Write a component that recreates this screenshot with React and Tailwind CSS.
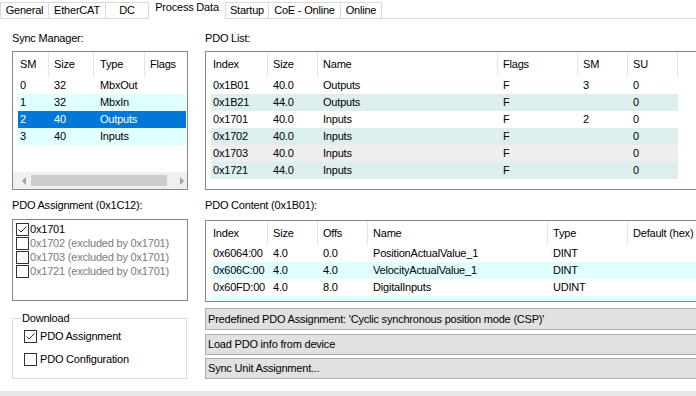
import React from "react";

function Check({ checked }) {
  return (
    <span className="w-[13px] h-[13px] border border-[#333333] bg-white flex items-center justify-center shrink-0">
      {checked && (
        <svg width="11" height="11" viewBox="0 0 11 11">
          <path d="M1.5 5.5 L4 8 L9.5 2.5" stroke="#333333" strokeWidth="1" fill="none" />
        </svg>
      )}
    </span>
  );
}

function Tabs() {
  const tab = "h-[16px] border-t border-r border-[#d9d9d9] flex items-center justify-center bg-white";
  return (
    <div className="h-[19px] border-b border-[#d9d9d9] flex items-end shrink-0">
      <div className={`${tab} border-l w-[49px]`}>General</div>
      <div className={`${tab} w-[57px]`}>EtherCAT</div>
      <div className={`${tab} w-[43px]`}>DC</div>
      <div className="relative -mb-px h-[19px] w-[76px] bg-white flex justify-center pt-[1px]">Process Data</div>
      <div className={`${tab} border-l w-[44px]`}>Startup</div>
      <div className={`${tab} w-[72px]`}>CoE - Online</div>
      <div className={`${tab} w-[41px]`}>Online</div>
    </div>
  );
}

const smRows = [
  { c: ["0", "32", "MbxOut", ""], bg: "bg-white" },
  { c: ["1", "32", "MbxIn", ""], bg: "bg-[#e0ffff]" },
  { c: ["2", "40", "Outputs", ""], bg: "bg-[#0078d7] text-white" },
  { c: ["3", "40", "Inputs", ""], bg: "bg-[#e0ffff]" },
];

const pdoRows = [
  { c: ["0x1B01", "40.0", "Outputs", "F", "3", "0"], bg: "bg-white" },
  { c: ["0x1B21", "44.0", "Outputs", "F", "", "0"], bg: "bg-[#dcefee]" },
  { c: ["0x1701", "40.0", "Inputs", "F", "2", "0"], bg: "bg-white" },
  { c: ["0x1702", "40.0", "Inputs", "F", "", "0"], bg: "bg-[#dcefee]" },
  { c: ["0x1703", "40.0", "Inputs", "F", "", "0"], bg: "bg-[#eeeeee]" },
  { c: ["0x1721", "44.0", "Inputs", "F", "", "0"], bg: "bg-[#dcefee]" },
];

const contentRows = [
  { c: ["0x6064:00", "4.0", "0.0", "PositionActualValue_1", "DINT", ""], bg: "bg-white" },
  { c: ["0x606C:00", "4.0", "4.0", "VelocityActualValue_1", "DINT", ""], bg: "bg-[#e0ffff]" },
  { c: ["0x60FD:00", "4.0", "8.0", "DigitalInputs", "UDINT", ""], bg: "bg-white" },
  { c: ["", "", "", "", "", ""], bg: "bg-[#e0ffff]" },
];

function Header({ cols, h }) {
  return (
    <div className={`flex shrink-0 ${h}`}>
      {cols.map((c, i) => (
        <div
          key={i}
          className={`shrink-0 border-r border-[#e5e5e5] flex items-center ${i === 0 ? "pl-[7px]" : "pl-[5px]"} ${c.w}`}
        >
          {c.t}
        </div>
      ))}
    </div>
  );
}

function Row({ cells, widths, bg, extra = "" }) {
  return (
    <div className={`flex h-[17px] ml-[5px] shrink-0 items-center ${bg} ${extra}`}>
      {cells.map((t, i) => (
        <div key={i} className={`shrink-0 whitespace-nowrap ${i === 0 ? "pl-[2px]" : "pl-[5px]"} ${widths[i]}`}>
          {t}
        </div>
      ))}
    </div>
  );
}

export default function App() {
  return (
    <div className="w-[696px] h-[396px] bg-white overflow-hidden flex flex-col text-[11px] leading-[13px] text-black font-['Liberation_Sans',Arial,sans-serif] tracking-[-0.2px]">
      <Tabs />
      <div className="flex-1 flex pl-[12px] gap-[17px]">
        {/* left column */}
        <div className="w-[176px] shrink-0 flex flex-col">
          <div className="mt-[13px] h-[13px]">Sync Manager:</div>
          <div className="mt-[6px] h-[139px] border border-[#828790] overflow-hidden flex flex-col">
            <Header
              h="h-[25px]"
              cols={[
                { t: "SM", w: "w-[36px]" },
                { t: "Size", w: "w-[45px]" },
                { t: "Type", w: "w-[51px] !pl-[6px]" },
                { t: "Flags", w: "w-[60px]" },
              ]}
            />
            {smRows.map((r, i) => (
              <Row
                key={i}
                cells={r.c}
                bg={r.bg}
                extra="w-[168px] overflow-hidden"
                widths={["w-[31px]", "w-[45px]", "w-[51px] !pl-[6px]", "w-[60px]"]}
              />
            ))}
            <div className="flex-1" />
            <div className="h-[17px] shrink-0 bg-[#f0f0f0] flex items-center">
              <span className="ml-[9px] w-0 h-0 border-y-[4px] border-y-transparent border-r-[4px] border-r-[#a3a3a3]" />
              <span className="ml-[5px] w-[136px] h-[11px] bg-[#cdcdcd]" />
              <span className="ml-[13px] w-0 h-0 border-y-[4px] border-y-transparent border-l-[4px] border-l-[#a3a3a3]" />
            </div>
          </div>

          <div className="mt-[9px] h-[13px]">PDO Assignment (0x1C12):</div>
          <div className="mt-[7px] h-[82px] border border-[#828790] pt-[2px] pl-[3px] flex flex-col">
            <div className="h-[14px] flex items-center gap-[1px]">
              <Check checked />
              <span>0x1701</span>
            </div>
            {["0x1702", "0x1703", "0x1721"].map((x) => (
              <div key={x} className="h-[14px] flex items-center gap-[1px] text-[#7a7a7a]">
                <Check />
                <span>{x} (excluded by 0x1701)</span>
              </div>
            ))}
          </div>

          <fieldset className="mt-[11px] w-[175px] border border-[#dcdcdc] pl-[11px] pt-[5px] pb-[12px]">
            <legend className="-ml-[3px] px-[1px]">Download</legend>
            <div className="h-[13px] flex items-center gap-[3px]">
              <Check checked />
              <span>PDO Assignment</span>
            </div>
            <div className="mt-[10px] h-[13px] flex items-center gap-[3px]">
              <Check />
              <span>PDO Configuration</span>
            </div>
          </fieldset>
        </div>

        {/* right column */}
        <div className="w-[500px] shrink-0 flex flex-col">
          <div className="mt-[13px] h-[13px]">PDO List:</div>
          <div className="mt-[6px] h-[139px] border border-[#828790] overflow-hidden flex flex-col">
            <Header
              h="h-[25px]"
              cols={[
                { t: "Index", w: "w-[62px]" },
                { t: "Size", w: "w-[50px]" },
                { t: "Name", w: "w-[180px]" },
                { t: "Flags", w: "w-[80px]" },
                { t: "SM", w: "w-[50px]" },
                { t: "SU", w: "w-[50px]" },
              ]}
            />
            {pdoRows.map((r, i) => (
              <Row
                key={i}
                cells={r.c}
                bg={r.bg}
                extra="w-[467px]"
                widths={["w-[57px]", "w-[50px]", "w-[180px]", "w-[80px]", "w-[50px]", "w-[50px]"]}
              />
            ))}
          </div>

          <div className="mt-[9px] h-[13px]">PDO Content (0x1B01):</div>
          <div className="mt-[8px] h-[82px] border border-[#828790] overflow-hidden flex flex-col">
            <Header
              h="h-[24px]"
              cols={[
                { t: "Index", w: "w-[62px]" },
                { t: "Size", w: "w-[50px]" },
                { t: "Offs", w: "w-[50px]" },
                { t: "Name", w: "w-[180px]" },
                { t: "Type", w: "w-[80px]" },
                { t: "Default (hex)", w: "w-[100px]" },
              ]}
            />
            {contentRows.map((r, i) => (
              <Row
                key={i}
                cells={r.c}
                bg={r.bg}
                widths={["w-[57px]", "w-[50px]", "w-[50px]", "w-[180px]", "w-[80px]", "w-[100px]"]}
              />
            ))}
          </div>

          <div className="mt-[6px] h-[22px] border border-[#adadad] bg-[#e1e1e1] flex items-center pl-[2px]">
            Predefined PDO Assignment: 'Cyclic synchronous position mode (CSP)'
          </div>
          <div className="mt-[4px] h-[21px] border border-[#adadad] bg-[#e1e1e1] flex items-center pl-[2px]">
            Load PDO info from device
          </div>
          <div className="mt-[3px] h-[21px] border border-[#adadad] bg-[#e1e1e1] flex items-center pl-[2px]">
            Sync Unit Assignment...
          </div>
        </div>
      </div>
      <div className="h-[5px] shrink-0 bg-[#e8e8e8]" />
    </div>
  );
}
